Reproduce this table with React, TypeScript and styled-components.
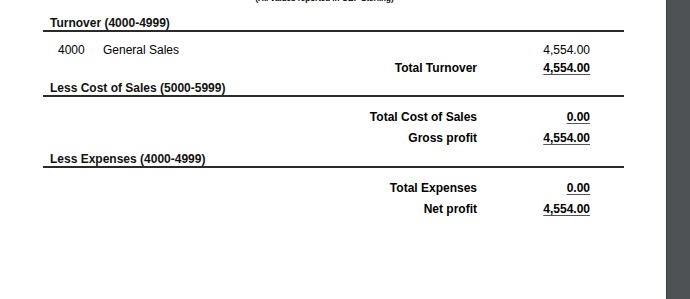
import React from 'react';
import styled, { createGlobalStyle } from 'styled-components';

interface Line {
  code?: string;
  label: string;
  amount: string;
  total?: boolean;
}

interface Section {
  title: string;
  compact?: boolean;
  lines: Line[];
}

const sections: Section[] = [
  {
    title: 'Turnover (4000-4999)',
    compact: true,
    lines: [
      { code: '4000', label: 'General Sales', amount: '4,554.00' },
      { label: 'Total Turnover', amount: '4,554.00', total: true },
    ],
  },
  {
    title: 'Less Cost of Sales (5000-5999)',
    lines: [
      { label: 'Total Cost of Sales', amount: '0.00', total: true },
      { label: 'Gross profit', amount: '4,554.00', total: true },
    ],
  },
  {
    title: 'Less Expenses (4000-4999)',
    lines: [
      { label: 'Total Expenses', amount: '0.00', total: true },
      { label: 'Net profit', amount: '4,554.00', total: true },
    ],
  },
];

const App: React.FC = () => {
  return (
    <>
      <GlobalStyle />
      <StyledViewer>
        <StyledPage>
          <StyledReport>
            <StyledNote>(All values reported in GBP Sterling)</StyledNote>
            {sections.map((section, i) => (
              <StyledSection key={section.title} first={i === 0}>
                <StyledHeading>{section.title}</StyledHeading>
                <StyledBody>
                  {section.lines.map((line) => (
                    <StyledRow key={line.label} compact={!!section.compact}>
                      <StyledCode>{line.code}</StyledCode>
                      <StyledLabel total={!!line.total}>{line.label}</StyledLabel>
                      <StyledAmount total={!!line.total}>{line.amount}</StyledAmount>
                    </StyledRow>
                  ))}
                </StyledBody>
              </StyledSection>
            ))}
          </StyledReport>
        </StyledPage>
        <StyledScrollbar />
      </StyledViewer>
    </>
  );
};

const GlobalStyle = createGlobalStyle`
  html, body {
    margin: 0;
    padding: 0;
    background: #ffffff;
  }
  body {
    font-family: "Liberation Sans", Arial, sans-serif;
    color: #000;
  }
`;

const StyledViewer = styled.div`
  display: flex;
  width: 690px;
  height: 299px;
  overflow: hidden;
`;

const StyledPage = styled.div`
  flex: 1;
  background: #ffffff;
  overflow: hidden;
`;

const StyledScrollbar = styled.div`
  width: 23px;
  background: #4f5254;
  border-left: 1px solid #3b3d3f;
`;

const StyledReport = styled.div`
  width: 581px;
  margin-left: 43px;
`;

// the page is scrolled, so only the lower half of this note shows
const StyledNote = styled.div`
  margin-top: -6px;
  height: 10px;
  line-height: 10px;
  font-size: 8px;
  font-weight: 700;
  text-align: center;
  padding-right: 18px;
`;

const StyledSection = styled.div<{ first: boolean }>`
  margin-top: ${(props) => (props.first ? 12 : 4)}px;
`;

const StyledHeading = styled.div`
  height: 14px;
  line-height: 14px;
  padding-left: 7px;
  font-size: 12px;
  font-weight: 700;
  color: #111;
  border-bottom: 2px solid #2a2a2a;
`;

const StyledBody = styled.div`
  padding-top: 9px;
`;

const StyledRow = styled.div<{ compact: boolean }>`
  display: grid;
  grid-template-columns: 45px 1fr 113px;
  align-items: center;
  height: ${(props) => (props.compact ? 18 : 21)}px;
  padding: 0 34px 0 15px;
  font-size: 12px;
`;

const StyledCode = styled.span``;

const StyledLabel = styled.span<{ total: boolean }>`
  font-weight: ${(props) => (props.total ? 700 : 400)};
  text-align: ${(props) => (props.total ? 'right' : 'left')};
`;

const StyledAmount = styled.span<{ total: boolean }>`
  text-align: right;
  font-weight: ${(props) => (props.total ? 700 : 400)};
  text-decoration: ${(props) => (props.total ? 'underline' : 'none')};
  text-decoration-color: #555;
  text-underline-offset: 2px;
`;

export default App;
